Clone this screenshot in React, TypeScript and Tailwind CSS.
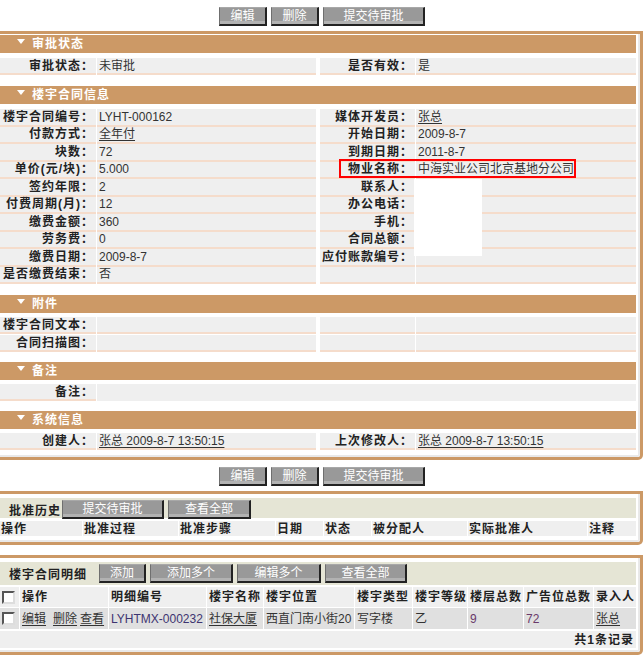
import React from 'react';

const Tri = () => (
  <svg width="8" height="5" viewBox="0 0 8 5" className="self-start mt-[4px] mr-[7px]">
    <path d="M0 0H8L4 5Z" fill="#fff" />
  </svg>
);

function Btn({ label, w }: { label: string; w: string }) {
  return (
    <div
      className={`${w} h-[19px] flex items-center justify-center bg-[#999999] shadow-[inset_0_-3px_0_#b2b2b2] border-l border-t border-l-[#6f6f6f] border-t-[#a8a8a8] border-r-2 border-b-2 border-r-[#222] border-b-[#222] text-white text-[12px] leading-none pb-px`}
    >
      {label}
    </div>
  );
}

function SectionHeader({ title }: { title: string }) {
  return (
    <div className="h-[18px] bg-[#cc9966] flex items-center pl-[17px] text-white font-bold text-[12px] tracking-[1px] leading-none">
      <Tri />
      {title}
    </div>
  );
}

const labelCls =
  'shrink-0 bg-[#efefef] border-b-2 border-[#f5dccb] flex items-center justify-end pr-[2px] font-bold tracking-[1px] text-[#222] whitespace-nowrap';
const valueCls =
  'bg-[#efefef] border-b-2 border-[#f5dccb] flex items-center pl-[2px] text-[#333] whitespace-nowrap';

function InfoRow({
  l1,
  v1,
  l2,
  v2,
  h = 'h-[17px]',
}: {
  l1: string;
  v1?: React.ReactNode;
  l2?: string;
  v2?: React.ReactNode;
  h?: string;
}) {
  return (
    <div className={`flex gap-px ${h}`}>
      <div className={`w-[96px] ${labelCls}`}>{l1}</div>
      <div className={`w-[219px] shrink-0 ${valueCls}`}>{v1}</div>
      <div className={`w-[95px] ml-[3px] ${labelCls}`}>{l2}</div>
      <div className={`flex-1 ${valueCls}`}>{v2}</div>
    </div>
  );
}

function Panel({ children, inner }: { children: React.ReactNode; inner: string }) {
  return (
    <div className="w-[643px] border-t-[3px] border-r-[3px] border-b-[3px] border-[#cc9966] rounded-br-[5px]">
      <div className={`border-r-2 border-b-2 border-[#e9e9e9] pr-[2px] rounded-br-[3px] ${inner}`}>{children}</div>
    </div>
  );
}

const Link = ({ children }: { children: React.ReactNode }) => (
  <span className="underline underline-offset-2 text-[#333]">{children}</span>
);

const Check = () => (
  <div className="w-[13px] h-[13px] bg-white border-2 border-t-[#555] border-l-[#555] border-b-[#ddd] border-r-[#ddd]" />
);

const contractRows: [string, React.ReactNode, string, React.ReactNode][] = [
  ['楼宇合同编号：', 'LYHT-000162', '媒体开发员：', <Link>张总</Link>],
  ['付款方式：', <Link>全年付</Link>, '开始日期：', '2009-8-7'],
  ['块数：', '72', '到期日期：', '2011-8-7'],
  ['单价(元/块)：', '5.000', '物业名称：', '中海实业公司北京基地分公司'],
  ['签约年限：', '2', '联系人：', ''],
  ['付费周期(月)：', '12', '办公电话：', ''],
  ['缴费金额：', '360', '手机：', ''],
  ['劳务费：', '0', '合同总额：', ''],
  ['缴费日期：', '2009-8-7', '应付账款编号：', ''],
  ['是否缴费结束：', '否', '', ''],
];

const historyCols = [
  { t: '操作', w: 'w-[82px]' },
  { t: '批准过程', w: 'w-[95px]' },
  { t: '批准步骤', w: 'w-[96px]' },
  { t: '日期', w: 'w-[47px]' },
  { t: '状态', w: 'w-[47px]' },
  { t: '被分配人', w: 'w-[95px]' },
  { t: '实际批准人', w: 'w-[119px]' },
  { t: '注释', w: 'flex-1' },
];

const detailW = [
  'w-[19px]',
  'w-[88px]',
  'w-[97px]',
  'w-[56px]',
  'w-[90px]',
  'w-[57px]',
  'w-[54px]',
  'w-[55px]',
  'w-[69px]',
  'flex-1',
];
const detailHead = ['', '操作', '明细编号', '楼宇名称', '楼宇位置', '楼宇类型', '楼宇等级', '楼层总数', '广告位总数', '录入人'];

export default function App() {
  const detailData: React.ReactNode[] = [
    <Check />,
    <span className="flex gap-[7px]">
      <Link>编辑</Link>
      <span className="flex gap-[3px]">
        <Link>删除</Link>
        <Link>查看</Link>
      </span>
    </span>,
    <span className="text-[#3d3470]">LYHTMX-000232</span>,
    <Link>社保大厦</Link>,
    '西直门南小街20',
    '写字楼',
    '乙',
    <span className="text-[#6a3a6a]">9</span>,
    <span className="text-[#6a3a6a]">72</span>,
    <Link>张总</Link>,
  ];

  return (
    <div className="relative w-[644px] h-[656px] bg-white overflow-hidden text-[12px] leading-none text-[#333] font-['Liberation_Sans','Noto_Sans_CJK_SC',sans-serif]">
      <div className="h-[31px] flex justify-center gap-[4px] pt-[7px]">
        <Btn label="编辑" w="w-[48px]" />
        <Btn label="删除" w="w-[48px]" />
        <Btn label="提交待审批" w="w-[102px]" />
      </div>

      <Panel inner="pt-px pb-[5px]">
        <SectionHeader title="审批状态" />
        <div className="mt-[5px]">
          <InfoRow l1="审批状态：" v1="未审批" l2="是否有效：" v2="是" />
        </div>

        <div className="mt-[11px]">
          <SectionHeader title="楼宇合同信息" />
        </div>
        <div className="mt-[5px] flex flex-col">
          {contractRows.map((r, i) => (
            <InfoRow key={i} l1={r[0]} v1={r[1]} l2={r[2]} v2={r[3]} h="h-[17.5px]" />
          ))}
        </div>

        <div className="mt-[11px]">
          <SectionHeader title="附件" />
        </div>
        <div className="mt-[4px] flex flex-col gap-px">
          <InfoRow l1="楼宇合同文本：" />
          <InfoRow l1="合同扫描图：" />
        </div>

        <div className="mt-[10px]">
          <SectionHeader title="备注" />
        </div>
        <div className="mt-[4px] flex gap-px h-[17px]">
          <div className={`w-[96px] ${labelCls}`}>备注：</div>
          <div className="flex-1 bg-[#efefef]" />
        </div>

        <div className="mt-[10px]">
          <SectionHeader title="系统信息" />
        </div>
        <div className="mt-[4px]">
          <InfoRow
            l1="创建人："
            v1={<Link>张总 2009-8-7 13:50:15</Link>}
            l2="上次修改人："
            v2={<Link>张总 2009-8-7 13:50:15</Link>}
          />
        </div>
      </Panel>

      <div className="h-[31px] flex justify-center gap-[4px] pt-[7px]">
        <Btn label="编辑" w="w-[48px]" />
        <Btn label="删除" w="w-[48px]" />
        <Btn label="提交待审批" w="w-[102px]" />
      </div>

      <Panel inner="pt-[4px] pb-[4px]">
        <div className="h-[20px] bg-[#e5e5d5] flex items-end">
          <span className="pl-[9px] pb-px text-[12px] tracking-[1px] font-bold text-[#222] w-[62px] whitespace-nowrap">批准历史</span>
          <div className="flex gap-[4px] self-start mt-[2px]">
            <Btn label="提交待审批" w="w-[102px]" />
            <Btn label="查看全部" w="w-[83px]" />
          </div>
        </div>
        <div className="mt-[3px] h-[15px] flex gap-px">
          {historyCols.map((c) => (
            <div key={c.t} className={`${c.w} bg-[#efefef] flex items-center pl-px font-bold tracking-[1px] text-[#222] whitespace-nowrap`}>
              {c.t}
            </div>
          ))}
        </div>
      </Panel>

      <div className="mt-[10px]">
        <Panel inner="pt-[4px] pb-[2px]">
          <div className="h-[23px] bg-[#e5e5d5] flex items-center">
            <span className="pl-[9px] pt-[3px] text-[12px] tracking-[1px] font-bold text-[#222] w-[99px] whitespace-nowrap">楼宇合同明细</span>
            <div className="flex gap-[4px]">
              <Btn label="添加" w="w-[47px]" />
              <Btn label="添加多个" w="w-[83px]" />
              <Btn label="编辑多个" w="w-[84px]" />
              <Btn label="查看全部" w="w-[82px]" />
            </div>
          </div>
          <div className="mt-[2px] h-[20px] flex gap-px">
            {detailHead.map((t, i) => (
              <div key={i} className={`${detailW[i]} bg-[#efefef] flex items-center pl-[2px] font-bold tracking-[1px] text-[#222] whitespace-nowrap overflow-hidden`}>
                {i === 0 ? <Check /> : t}
              </div>
            ))}
          </div>
          <div className="mt-px h-[21px] flex gap-px">
            {detailData.map((d, i) => (
              <div key={i} className={`${detailW[i]} bg-[#e0e0e0] flex items-center pl-[2px] whitespace-nowrap`}>
                {d}
              </div>
            ))}
          </div>
          <div className="mt-[2px] h-[17px] bg-[#efefef] flex items-center justify-end pr-[2px] font-bold tracking-[1px] text-[#222]">
            共1条记录
          </div>
        </Panel>
      </div>

      <div className="absolute left-[339px] top-[159px] w-[237px] h-[19px] border-2 border-[#ff0000]" />
      <div className="absolute left-[414px] top-[179px] w-[68px] h-[77px] bg-white" />
    </div>
  );
}
